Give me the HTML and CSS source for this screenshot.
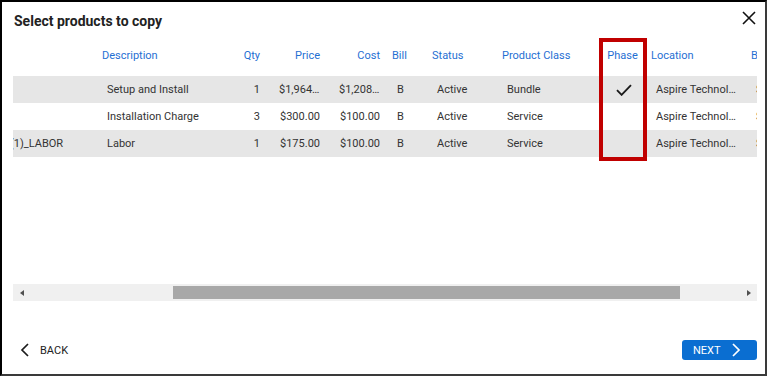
FILE: index.html
```html
<!DOCTYPE html>
<html lang="en">
<head>
<meta charset="utf-8">
<title>Select products to copy</title>
<link rel="stylesheet" href="styles.css">
</head>
<body>
<div class="dialog">
  <div class="dlg-head">
    <h1 class="title">Select products to copy</h1>
    <button class="close" aria-label="Close">
      <svg width="14" height="14" viewBox="0 0 14 14"><path d="M1 1 L13 13 M13 1 L1 13" stroke="#111" stroke-width="1.6" fill="none"/></svg>
    </button>
  </div>

  <div class="grid">
    <div class="viewport">
      <div class="inner">
        <div class="row head">
          <div class="c"></div>
          <div class="c">Description</div>
          <div class="c r">Qty</div>
          <div class="c r">Price</div>
          <div class="c r cost">Cost</div>
          <div class="c">Bill</div>
          <div class="c">Status</div>
          <div class="c">Product Class</div>
          <div class="c mid">Phase</div>
          <div class="c">Location</div>
          <div class="c">Branch</div>
        </div>
        <div class="row alt">
          <div class="c"></div>
          <div class="c">Setup and Install</div>
          <div class="c r">1</div>
          <div class="c r price">$1,964.00</div>
          <div class="c r cost">$1,208.00</div>
          <div class="c">B</div>
          <div class="c">Active</div>
          <div class="c">Bundle</div>
          <div class="c mid"><svg class="check" width="16" height="12" viewBox="0 0 16 12"><path d="M1 6.2 L5.6 10.8 L15 1.2" stroke="#1b1b1b" stroke-width="1.9" fill="none"/></svg></div>
          <div class="c">Aspire Technologies</div>
          <div class="c">Seattle</div>
        </div>
        <div class="row">
          <div class="c"></div>
          <div class="c">Installation Charge</div>
          <div class="c r">3</div>
          <div class="c r price">$300.00</div>
          <div class="c r cost">$100.00</div>
          <div class="c">B</div>
          <div class="c">Active</div>
          <div class="c">Service</div>
          <div class="c mid"></div>
          <div class="c">Aspire Technologies</div>
          <div class="c">Seattle</div>
        </div>
        <div class="row alt">
          <div class="c">(1)_LABOR</div>
          <div class="c">Labor</div>
          <div class="c r">1</div>
          <div class="c r price">$175.00</div>
          <div class="c r cost">$100.00</div>
          <div class="c">B</div>
          <div class="c">Active</div>
          <div class="c">Service</div>
          <div class="c mid"></div>
          <div class="c">Aspire Technologies</div>
          <div class="c">Seattle</div>
        </div>
      </div>
    </div>
    <div class="scrollbar">
      <span class="arrow left"></span>
      <div class="track"><div class="thumb"></div></div>
      <span class="arrow right"></span>
    </div>
  </div>

  <div class="dlg-foot">
    <button class="back">
      <svg width="9" height="14" viewBox="0 0 9 14"><path d="M8 1 L2 7 L8 13" stroke="#1b1b1b" stroke-width="1.7" fill="none"/></svg>
      <span>BACK</span>
    </button>
    <button class="next">
      <span>NEXT</span>
      <svg width="9" height="14" viewBox="0 0 9 14"><path d="M1 1 L7 7 L1 13" stroke="#fff" stroke-width="1.7" fill="none"/></svg>
    </button>
  </div>

  <div class="highlight"></div>
</div>
</body>
</html>
```

FILE: styles.css
```css
* { box-sizing: border-box; }

html, body {
  margin: 0;
  padding: 0;
  background: #fff;
}

body {
  font-family: Roboto, "Liberation Sans", Arial, sans-serif;
  color: #333;
}

.dialog {
  position: relative;
  width: 767px;
  height: 376px;
  border-left: 2px solid #000;
  border-top: 2px solid #000;
  border-right: 2px solid #3a3a3a;
  border-bottom: 2px solid #3a3a3a;
  padding: 0 8px 0 11px;
  display: flex;
  flex-direction: column;
  background: #fff;
}

.dlg-head {
  height: 36px;
  display: flex;
  justify-content: space-between;
  align-items: flex-start;
  padding-top: 11px;
}

.title {
  margin: 0 0 0 1px;
  font-size: 14px;
  line-height: 16px;
  font-weight: 700;
  color: #222;
}

.close {
  border: 0;
  background: none;
  padding: 0;
  margin: -2px 1px 0 0;
  width: 14px;
  height: 14px;
  display: block;
}
.close svg { display: block; }

.grid {
  height: 263px;
  display: flex;
  flex-direction: column;
}

.viewport {
  flex: 1;
  overflow: hidden;
}

.inner {
  margin-left: -13px;
  width: 845px;
}

.row {
  display: grid;
  grid-template-columns: 97px 125px 43px 60px 62px 40px 70px 102px 47px 100px 100px;
  height: 27px;
  align-items: center;
  font-size: 11px;
  line-height: 13px;
  color: #333;
}

.row.alt { background: #e6e6e6; }

.row.head {
  height: 38px;
  padding-bottom: 4px;
  color: #1f6fd3;
}

.c {
  padding: 0 5px 0 10px;
  white-space: nowrap;
  overflow: hidden;
  text-overflow: ellipsis;
}

.head .c { padding-left: 5px; }

.c.r { text-align: right; }
.c.price { padding-left: 14px; }
.c.cost { padding-left: 14px; padding-right: 7px; }
.c.mid { text-align: center; padding: 0; }

.check {
  display: block;
  margin: 0 auto;
  position: relative;
  left: 1px;
}

.scrollbar {
  height: 17px;
  background: #f0f0f0;
  display: flex;
  align-items: center;
}

.track {
  flex: 1;
  height: 13px;
  margin: 0 3px;
}

.thumb {
  margin-left: 146px;
  width: 507px;
  height: 13px;
  background: #a8a8a8;
}

.arrow {
  width: 0;
  height: 0;
  border-top: 3.5px solid transparent;
  border-bottom: 3.5px solid transparent;
}
.arrow.left {
  margin-left: 7px;
  border-right: 4px solid #505050;
}
.arrow.right {
  margin-right: 6px;
  border-left: 4px solid #505050;
}

.dlg-foot {
  flex: 1;
  display: flex;
  justify-content: space-between;
  align-items: flex-start;
  padding-top: 39px;
}

button {
  font-family: inherit;
  cursor: pointer;
}

.back {
  border: 0;
  background: none;
  padding: 0;
  margin-left: 7px;
  height: 20px;
  display: flex;
  align-items: center;
  gap: 11px;
  font-size: 11px;
  color: #222;
}
.back svg { display: block; }

.next {
  width: 75px;
  height: 20px;
  border: 0;
  border-radius: 3px;
  background: #0a6ed1;
  color: #fff;
  font-size: 11px;
  display: flex;
  align-items: center;
  padding: 0 0 0 11px;
  gap: 11px;
}
.next svg { display: block; }

.highlight {
  position: absolute;
  left: 597px;
  top: 36px;
  width: 48px;
  height: 123px;
  border: 4px solid #c00000;
  pointer-events: none;
}
```
